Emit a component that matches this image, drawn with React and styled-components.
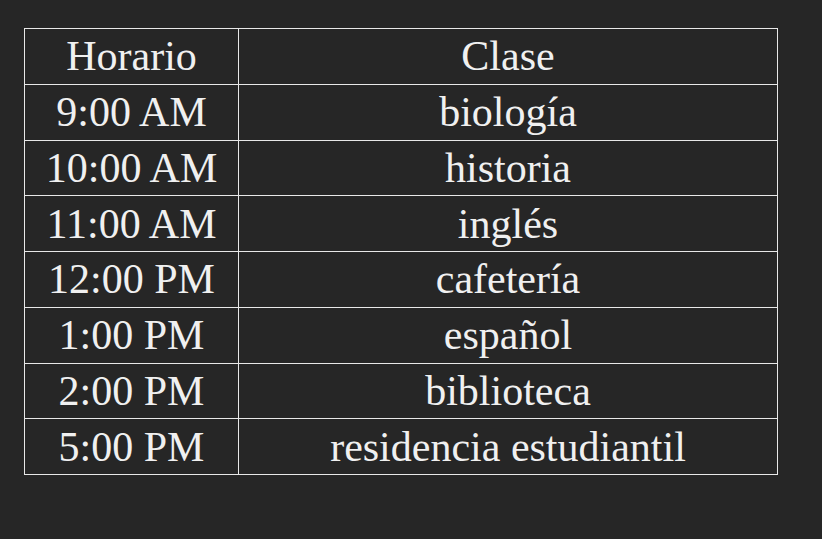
import React from "react";
import styled, { createGlobalStyle } from "styled-components";

const Global = createGlobalStyle`
  html, body { margin: 0; padding: 0; background: #262626; }
  body { width: 822px; height: 539px; overflow: hidden; }
`;

const Page = styled.div`
  padding: 28px 0 0 24px;
  font-family: "Liberation Serif", "Times New Roman", serif;
  color: #f0f0f0;
`;

const Table = styled.table`
  width: 754px;
  border-collapse: collapse;
  table-layout: fixed;
`;

const Row = styled.tr`
  height: 55.75px;
`;

const Cell = styled.td`
  border: 1px solid #e8e8e8;
  padding: 0;
  text-align: center;
  vertical-align: middle;
  font-size: 42px;
  line-height: 1;
  width: ${(p) => (p.$narrow ? "213px" : "auto")};
`;

const rows = [
  ["Horario", "Clase"],
  ["9:00 AM", "biología"],
  ["10:00 AM", "historia"],
  ["11:00 AM", "inglés"],
  ["12:00 PM", "cafetería"],
  ["1:00 PM", "español"],
  ["2:00 PM", "biblioteca"],
  ["5:00 PM", "residencia estudiantil"],
];

export default function App() {
  return (
    <>
      <Global />
      <Page>
        <Table>
          <tbody>
            {rows.map(([a, b], i) => (
              <Row key={i}>
                <Cell $narrow>{a}</Cell>
                <Cell>{b}</Cell>
              </Row>
            ))}
          </tbody>
        </Table>
      </Page>
    </>
  );
}
